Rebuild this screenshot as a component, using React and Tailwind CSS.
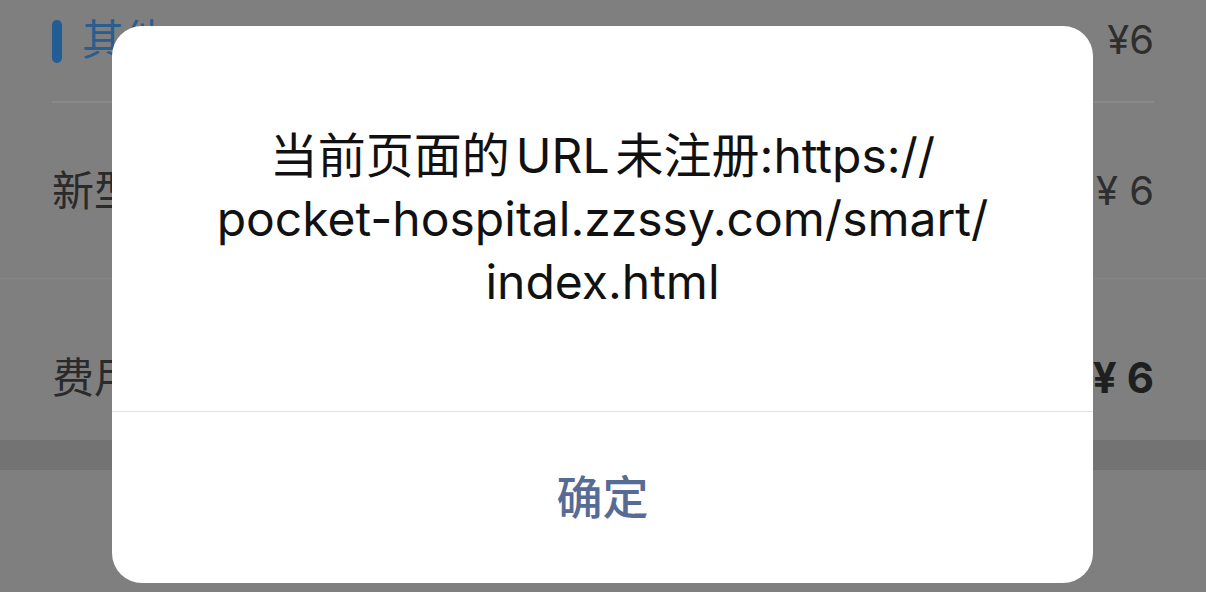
const App = () => {
  return (
    <div
      className="relative w-[1206px] h-[592px] overflow-hidden bg-[#7f7f7f]"
      style={{ fontFamily: '"Inter", "Noto Sans CJK SC", sans-serif' }}
    >
      {/* page underneath the mask */}
      <div className="flex flex-col">
        <div className="h-[101px] flex items-center justify-between px-[52px] pb-[22px]">
          <div className="flex items-center gap-[20px]">
            <div className="w-[10px] h-[43px] rounded-full bg-[#235d96] mt-[4px]" />
            <span className="text-[42px] text-[#2b5d8f] leading-none">其他</span>
          </div>
          <span className="text-[40px] text-[#2e2e2e] leading-none">¥6</span>
        </div>
        <div className="mx-[52px] h-[2px] bg-[#898989]" />
        <div className="h-[176px] flex items-center justify-between px-[52px] border-b border-[#858585]">
          <span className="text-[42px] text-[#2a2a2a] leading-none">新型</span>
          <span className="text-[40px] text-[#2e2e2e] leading-none">¥ 6</span>
        </div>
        <div className="h-[161px] flex items-center justify-between px-[52px] pt-[36px]">
          <span className="text-[42px] text-[#2a2a2a] leading-none">费用</span>
          <span className="text-[42px] font-bold text-[#1f1f1f] leading-none">¥ 6</span>
        </div>
        <div className="h-[30px] bg-[#737373]" />
      </div>

      {/* dialog */}
      <div className="absolute left-[112px] top-[26px] w-[981px] h-[557px] bg-white rounded-[30px] flex flex-col">
        <div className="h-[385px] flex items-center justify-center px-[30px]">
          <p className="text-center text-[48px] leading-[63px] text-[#111111]">
            当前页面的<span className="mx-[6px]">URL</span>未注册:https://
            <br />
            pocket-hospital.zzssy.com/smart/
            <br />
            index.html
          </p>
        </div>
        <div className="h-[1px] bg-[#e3e3e3]" />
        <div className="flex-1 flex items-center justify-center pb-[2px]">
          <span className="text-[46px] font-medium text-[#576b95] leading-none">确定</span>
        </div>
      </div>
    </div>
  );
};

export default App;
